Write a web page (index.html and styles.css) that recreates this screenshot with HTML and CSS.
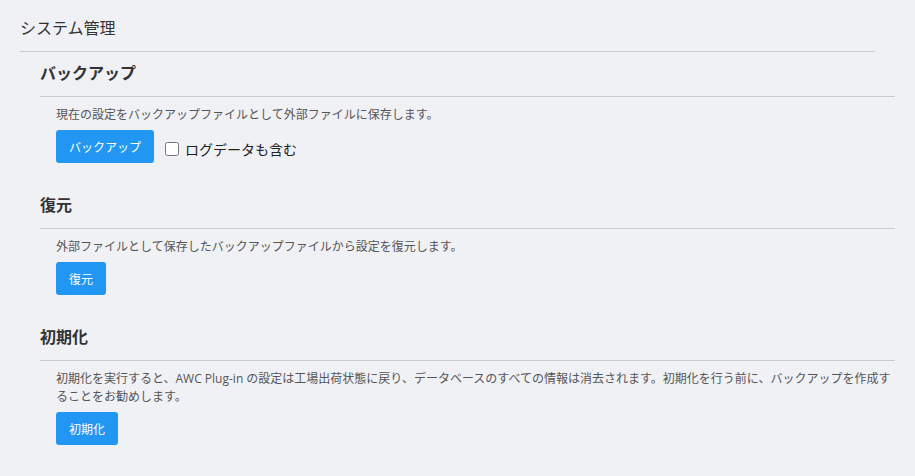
FILE: index.html
```html
<!DOCTYPE html>
<html lang="ja">
<head>
    <meta charset="UTF-8">
    <meta name="viewport" content="width=device-width, initial-scale=1.0">
    <title>システム管理</title>
    <link rel="stylesheet" href="styles.css">
</head>
<body>
    <div class="page">
        <h1 class="page-title">システム管理</h1>

        <section class="section">
            <h2>バックアップ</h2>
            <div class="section-body">
                <p>現在の設定をバックアップファイルとして外部ファイルに保存します。</p>
                <div class="actions">
                    <button type="button">バックアップ</button>
                    <label class="check">
                        <input type="checkbox" id="includeLog">
                        <span>ログデータも含む</span>
                    </label>
                </div>
            </div>
        </section>

        <section class="section">
            <h2>復元</h2>
            <div class="section-body">
                <p>外部ファイルとして保存したバックアップファイルから設定を復元します。</p>
                <div class="actions">
                    <button type="button">復元</button>
                </div>
            </div>
        </section>

        <section class="section">
            <h2>初期化</h2>
            <div class="section-body">
                <p>初期化を実行すると、AWC Plug-in の設定は工場出荷状態に戻り、データベースのすべての情報は消去されます。初期化を行う前に、バックアップを作成することをお勧めします。</p>
                <div class="actions">
                    <button type="button">初期化</button>
                </div>
            </div>
        </section>
    </div>
</body>
</html>
```

FILE: styles.css
```css
* {
    box-sizing: border-box;
}

body {
    margin: 0;
    padding: 0;
    background: #f0f1f5;
    font-family: "Open Sans", "Noto Sans CJK JP", sans-serif;
    color: #333;
}

.page {
    width: 855px;
    margin-left: 20px;
}

.page-title {
    margin: 0;
    padding: 18px 0 13px;
    font-size: 16px;
    line-height: 20px;
    font-weight: normal;
    color: #333;
    border-bottom: 1px solid #c9cacf;
}

.section {
    margin: 31px 0 0 20px;
    width: 100%;
}

.section:first-of-type {
    margin-top: 10px;
}

.section h2 {
    margin: 0;
    padding-bottom: 12px;
    font-size: 16px;
    line-height: 22px;
    font-weight: bold;
    color: #333;
    border-bottom: 1px solid #c9cacf;
}

.section-body {
    padding-left: 16px;
}

.section-body p {
    margin: 9px 0 0;
    font-size: 12px;
    line-height: 18px;
    color: #555;
}

.actions {
    display: flex;
    align-items: center;
    margin-top: 6px;
}

button {
    height: 33px;
    padding: 0 13px;
    background-color: #2196f3;
    color: #fff;
    font-family: inherit;
    font-size: 12px;
    border: none;
    border-radius: 3px;
    cursor: pointer;
}

.check {
    display: flex;
    align-items: center;
    margin: 4px 0 0 11px;
    font-size: 14px;
    color: #222;
}

.check input {
    width: 14px;
    height: 14px;
    margin: 0 6px 0 0;
}
```
